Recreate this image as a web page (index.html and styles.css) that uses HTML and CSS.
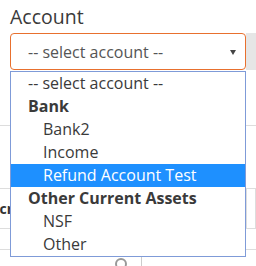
FILE: index.html
```html
<!DOCTYPE html>
<html>
<head>
    <title>Account</title>
    <link rel="stylesheet" href="styles.css">
</head>
<body>
    <div class="form">
        <label class="field-label">Account</label>
        <div class="select-row">
            <div class="select">
                <span>-- select account --</span>
                <span class="caret"></span>
            </div>
            <div class="addon"></div>
        </div>

        <!-- open dropdown list -->
        <div class="listbox">
            <div class="option">-- select account --</div>
            <div class="group">Bank</div>
            <div class="option child">Bank2</div>
            <div class="option child">Income</div>
            <div class="option child selected">Refund Account Test</div>
            <div class="group">Other Current Assets</div>
            <div class="option child">NSF</div>
            <div class="option child">Other</div>
        </div>
    </div>

    <div class="section-rule"></div>

    <div class="grid-head">
        <div class="head-cell">Description</div>
        <div class="head-edge"></div>
    </div>
    <div class="grid-row"></div>

    <div class="toolbar">
        <svg class="search-icon" width="14" height="14" viewBox="0 0 14 14">
            <circle cx="7" cy="7" r="5" fill="none" stroke="#999" stroke-width="2"/>
        </svg>
        <div class="divider"></div>
    </div>
</body>
</html>
```

FILE: styles.css
```css
body {
    margin: 0;
    font-family: "Open Sans", "DejaVu Sans", sans-serif;
    color: #333;
    background: #fff;
    overflow: hidden;
}

.form {
    position: relative;
}

.field-label {
    display: block;
    padding: 4px 0 0 10px;
    font-size: 19.5px;
    line-height: 26px;
    color: #3a3a3a;
    margin-bottom: 3px;
}

.select-row {
    display: flex;
    height: 37px;
    padding-left: 10px;
}

.select {
    flex-shrink: 0;
    box-sizing: border-box;
    width: 236px;
    height: 37px;
    border: 1px solid #e8702e;
    border-radius: 4px;
    padding: 0 9px 0 17px;
    display: flex;
    align-items: center;
    justify-content: space-between;
    font-size: 16px;
    color: #555;
}

.caret {
    width: 0;
    height: 0;
    border-left: 3px solid transparent;
    border-right: 3px solid transparent;
    border-top: 5px solid #444;
    margin-top: 1px;
}

.addon {
    flex: 1;
    background: #e6e6e6;
}

.listbox {
    position: absolute;
    top: 71px;
    left: 10px;
    width: 236px;
    box-sizing: border-box;
    border: 1px solid #7f9bd8;
    background: #fff;
    z-index: 2;
}

.option,
.group {
    height: 23px;
    line-height: 23px;
    font-size: 16px;
    padding-left: 17px;
    color: #3a3a3a;
    white-space: nowrap;
}

.group {
    font-weight: bold;
}

.option.child {
    padding-left: 32px;
}

.option.selected {
    background: #1e90ff;
    color: #fff;
}

.section-rule {
    margin-top: 55px;
    border-top: 1px solid #dddddd;
}

.grid-head {
    margin-top: 62px;
    height: 39px;
    border-top: 1px solid #dddddd;
    border-bottom: 1px solid #dddddd;
    display: flex;
    justify-content: space-between;
    align-items: center;
    overflow: hidden;
}

.head-cell {
    font-weight: bold;
    font-size: 14px;
    text-indent: -26px;
    color: #333;
    white-space: nowrap;
}

.head-edge {
    width: 8px;
    height: 39px;
    border-left: 1px solid #dddddd;
    border-right: 1px solid #dddddd;
}

.grid-row {
    height: 20px;
    border-bottom: 1px solid #dddddd;
}

.toolbar {
    margin-top: 7px;
    display: flex;
    align-items: flex-start;
    padding-left: 114px;
}

.search-icon {
    display: block;
}

.divider {
    width: 1px;
    height: 10px;
    background: #cccccc;
    margin-left: 13px;
}
```
